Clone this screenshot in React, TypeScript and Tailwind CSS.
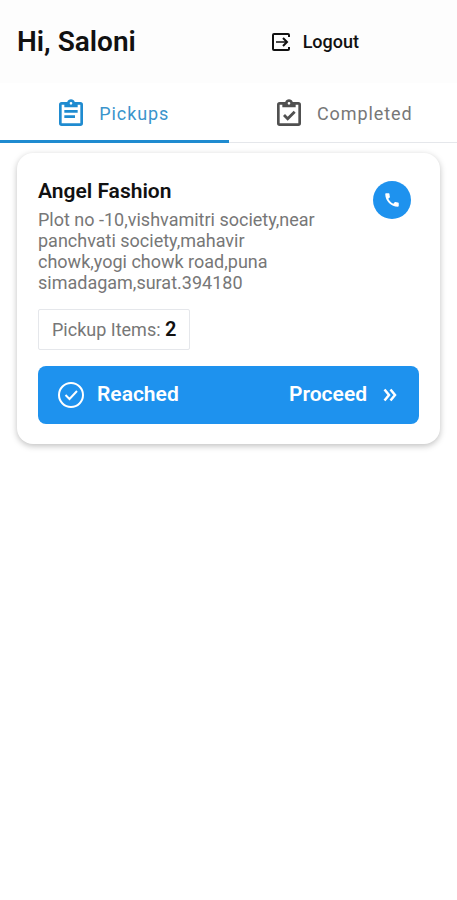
import { MdCall } from "react-icons/md";

const pickups = [
  {
    name: "Angel Fashion",
    address: "Plot no -10,vishvamitri society,near panchvati society,mahavir chowk,yogi chowk road,puna simadagam,surat.394180",
    items: 2,
  },
];

const clipboardMarks = {
  text: "M17 11H7V9h10v2zM15 15H7v-2h8v2z",
  check: "M7.500 13.500L9 12l2 2 4.500-4.500L17 11l-6 6-3.500-3.500z",
};

function ClipboardIcon({ mark, className }: { mark: keyof typeof clipboardMarks; className: string }) {
  return (
    <svg viewBox="0 0 24 24" className={className} fill="currentColor" fillRule="evenodd" aria-hidden="true">
      <path d="M19 3h-4.180C14.400 1.840 13.300 1 12 1S9.600 1.840 9.180 3H5a2 2 0 0 0-2 2v14a2 2 0 0 0 2 2h14a2 2 0 0 0 2-2V5a2 2 0 0 0-2-2zM12 3a1 1 0 1 1 0 2 1 1 0 0 1 0-2zM7 7h10V5h2v14H5V5h2v2z" />
      <path d={clipboardMarks[mark]} />
    </svg>
  );
}

function LogoutIcon() {
  return (
    <svg viewBox="0 0 24 24" className="size-6" fill="none" stroke="currentColor" strokeWidth="2" aria-hidden="true">
      <path d="M20 7V5a1 1 0 0 0-1-1H5a1 1 0 0 0-1 1v14a1 1 0 0 0 1 1h14a1 1 0 0 0 1-1v-2" />
      <path d="M7 12h11" strokeWidth="1.5" />
      <path d="M14 8l4 4-4 4" />
    </svg>
  );
}

function ReachedIcon() {
  return (
    <svg viewBox="0 0 28 28" className="size-7" fill="none" stroke="currentColor" strokeWidth="2" aria-hidden="true">
      <circle cx="14" cy="14" r="12" />
      <path d="M8.500 14l4 4 7.500-8" />
    </svg>
  );
}

function ProceedIcon() {
  return (
    <svg viewBox="0 0 14 14" className="size-3.5" fill="none" stroke="currentColor" strokeWidth="2.5" aria-hidden="true">
      <path d="M1.500 1.500L6 7l-4.500 5.500M7.500 1.500L12 7l-4.500 5.500" />
    </svg>
  );
}

function Header() {
  return (
    <header className="flex h-[83px] items-center justify-between bg-[#fdfdfd] pl-[17px] pr-[98px]">
      <h1 className="text-[28px] leading-8 font-semibold">Hi, Saloni</h1>
      <button type="button" className="flex items-center gap-2.5 text-lg font-medium">
        <LogoutIcon />
        Logout
      </button>
    </header>
  );
}

function Tabs() {
  return (
    <nav className="grid grid-cols-2 border-b border-gray-200">
      <button
        type="button"
        aria-current="page"
        className="-mb-px flex h-[60px] items-center justify-center gap-3 border-b-3 border-[#1f8bd0] pt-1 pr-1 text-lg tracking-wider text-[#3a94cc]"
      >
        <ClipboardIcon mark="text" className="size-8 text-[#1f8bd0]" />
        Pickups
      </button>
      <button
        type="button"
        className="-mb-px flex h-[60px] items-center justify-center gap-3 border-b-3 border-transparent pt-1 text-lg tracking-wider text-[#777777]"
      >
        <ClipboardIcon mark="check" className="size-8 text-[#505050]" />
        Completed
      </button>
    </nav>
  );
}

export default function App() {
  return (
    <div className="min-h-screen bg-white font-[Roboto,sans-serif] text-[#111111]">
      <Header />
      <Tabs />
      <main className="px-[17px] pt-2.5">
        {pickups.map((pickup) => (
          <article
            key={pickup.name}
            className="rounded-2xl bg-white px-[21px] pt-6 pb-5 shadow-[0_2px_6px_rgba(0,0,0,0.25)]"
          >
            <div className="flex items-start justify-between">
              <div className="max-w-72">
                <h2 className="text-[21px] leading-7 font-semibold">{pickup.name}</h2>
                <p className="mt-1 text-lg leading-[21px] text-[#777777]">{pickup.address}</p>
              </div>
              <button
                type="button"
                aria-label="Call"
                className="mt-1 mr-2 flex size-[38px] items-center justify-center rounded-full bg-[#1e92ee] text-white"
              >
                <MdCall className="size-[18px]" aria-hidden="true" />
              </button>
            </div>
            <div className="mt-4 w-fit rounded-xs border border-gray-200 px-[13px] py-[5px] text-lg leading-7 text-[#777777]">
              Pickup Items: <span className="text-xl font-semibold text-[#111111]">{pickup.items}</span>
            </div>
            <button
              type="button"
              className="mt-4 flex h-[58px] w-full items-center justify-between rounded-lg bg-[#1e92ee] pl-[19px] pr-[22px] text-[21px] font-semibold text-white"
            >
              <span className="flex items-center gap-3">
                <ReachedIcon />
                Reached
              </span>
              <span className="flex items-center gap-4">
                Proceed
                <ProceedIcon />
              </span>
            </button>
          </article>
        ))}
      </main>
    </div>
  );
}
